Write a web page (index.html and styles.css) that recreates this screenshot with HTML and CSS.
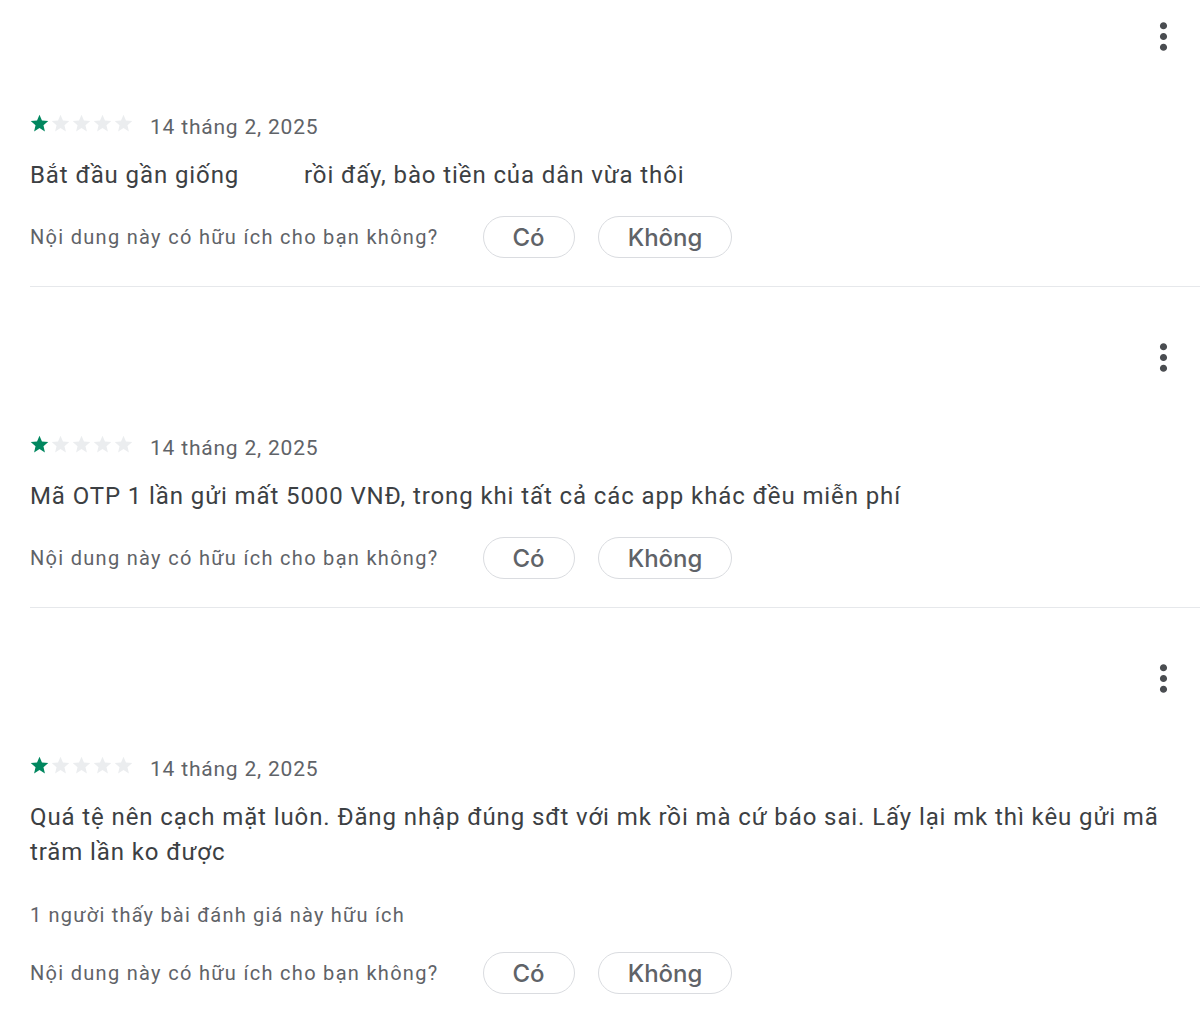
FILE: index.html
```html
<!DOCTYPE html>
<html lang="vi">

<head>
    <meta charset="UTF-8">
    <meta name="viewport" content="width=device-width, initial-scale=1.0">
    <title>Đánh giá</title>
    <link rel="stylesheet" href="styles.css">
</head>

<body>
    <div class="reviews">
        <div class="review">
            <div class="review-top">
                <button class="more-button" aria-label="Thêm">
                    <svg viewBox="0 0 24 24" class="more-icon"><path d="M12 8c1.1 0 2-.9 2-2s-.9-2-2-2-2 .9-2 2 .9 2 2 2zm0 2c-1.1 0-2 .9-2 2s.9 2 2 2 2-.9 2-2-.9-2-2-2zm0 6c-1.1 0-2 .9-2 2s.9 2 2 2 2-.9 2-2-.9-2-2-2z"/></svg>
                </button>
            </div>
            <div class="review-meta">
                <div class="stars">
                    <svg viewBox="0 0 24 24" class="star on"><path d="M12 17.27L18.18 21l-1.64-7.03L22 9.24l-7.19-.61L12 2 9.19 8.63 2 9.24l5.46 4.73L5.82 21z"/></svg>
                    <svg viewBox="0 0 24 24" class="star"><path d="M12 17.27L18.18 21l-1.64-7.03L22 9.24l-7.19-.61L12 2 9.19 8.63 2 9.24l5.46 4.73L5.82 21z"/></svg>
                    <svg viewBox="0 0 24 24" class="star"><path d="M12 17.27L18.18 21l-1.64-7.03L22 9.24l-7.19-.61L12 2 9.19 8.63 2 9.24l5.46 4.73L5.82 21z"/></svg>
                    <svg viewBox="0 0 24 24" class="star"><path d="M12 17.27L18.18 21l-1.64-7.03L22 9.24l-7.19-.61L12 2 9.19 8.63 2 9.24l5.46 4.73L5.82 21z"/></svg>
                    <svg viewBox="0 0 24 24" class="star"><path d="M12 17.27L18.18 21l-1.64-7.03L22 9.24l-7.19-.61L12 2 9.19 8.63 2 9.24l5.46 4.73L5.82 21z"/></svg>
                </div>
                <span class="review-date">14 tháng 2, 2025</span>
            </div>
            <p class="review-text">Bắt đầu gần giống <span class="blank"></span>rồi đấy, bào tiền của dân vừa thôi</p>
            <div class="helpful">
                <span class="helpful-question">Nội dung này có hữu ích cho bạn không?</span>
                <button class="chip">Có</button>
                <button class="chip">Không</button>
            </div>
        </div>

        <div class="review">
            <div class="review-top">
                <button class="more-button" aria-label="Thêm">
                    <svg viewBox="0 0 24 24" class="more-icon"><path d="M12 8c1.1 0 2-.9 2-2s-.9-2-2-2-2 .9-2 2 .9 2 2 2zm0 2c-1.1 0-2 .9-2 2s.9 2 2 2 2-.9 2-2-.9-2-2-2zm0 6c-1.1 0-2 .9-2 2s.9 2 2 2 2-.9 2-2-.9-2-2-2z"/></svg>
                </button>
            </div>
            <div class="review-meta">
                <div class="stars">
                    <svg viewBox="0 0 24 24" class="star on"><path d="M12 17.27L18.18 21l-1.64-7.03L22 9.24l-7.19-.61L12 2 9.19 8.63 2 9.24l5.46 4.73L5.82 21z"/></svg>
                    <svg viewBox="0 0 24 24" class="star"><path d="M12 17.27L18.18 21l-1.64-7.03L22 9.24l-7.19-.61L12 2 9.19 8.63 2 9.24l5.46 4.73L5.82 21z"/></svg>
                    <svg viewBox="0 0 24 24" class="star"><path d="M12 17.27L18.18 21l-1.64-7.03L22 9.24l-7.19-.61L12 2 9.19 8.63 2 9.24l5.46 4.73L5.82 21z"/></svg>
                    <svg viewBox="0 0 24 24" class="star"><path d="M12 17.27L18.18 21l-1.64-7.03L22 9.24l-7.19-.61L12 2 9.19 8.63 2 9.24l5.46 4.73L5.82 21z"/></svg>
                    <svg viewBox="0 0 24 24" class="star"><path d="M12 17.27L18.18 21l-1.64-7.03L22 9.24l-7.19-.61L12 2 9.19 8.63 2 9.24l5.46 4.73L5.82 21z"/></svg>
                </div>
                <span class="review-date">14 tháng 2, 2025</span>
            </div>
            <p class="review-text">Mã OTP 1 lần gửi mất 5000 VNĐ, trong khi tất cả các app khác đều miễn phí</p>
            <div class="helpful">
                <span class="helpful-question">Nội dung này có hữu ích cho bạn không?</span>
                <button class="chip">Có</button>
                <button class="chip">Không</button>
            </div>
        </div>

        <div class="review">
            <div class="review-top">
                <button class="more-button" aria-label="Thêm">
                    <svg viewBox="0 0 24 24" class="more-icon"><path d="M12 8c1.1 0 2-.9 2-2s-.9-2-2-2-2 .9-2 2 .9 2 2 2zm0 2c-1.1 0-2 .9-2 2s.9 2 2 2 2-.9 2-2-.9-2-2-2zm0 6c-1.1 0-2 .9-2 2s.9 2 2 2 2-.9 2-2-.9-2-2-2z"/></svg>
                </button>
            </div>
            <div class="review-meta">
                <div class="stars">
                    <svg viewBox="0 0 24 24" class="star on"><path d="M12 17.27L18.18 21l-1.64-7.03L22 9.24l-7.19-.61L12 2 9.19 8.63 2 9.24l5.46 4.73L5.82 21z"/></svg>
                    <svg viewBox="0 0 24 24" class="star"><path d="M12 17.27L18.18 21l-1.64-7.03L22 9.24l-7.19-.61L12 2 9.19 8.63 2 9.24l5.46 4.73L5.82 21z"/></svg>
                    <svg viewBox="0 0 24 24" class="star"><path d="M12 17.27L18.18 21l-1.64-7.03L22 9.24l-7.19-.61L12 2 9.19 8.63 2 9.24l5.46 4.73L5.82 21z"/></svg>
                    <svg viewBox="0 0 24 24" class="star"><path d="M12 17.27L18.18 21l-1.64-7.03L22 9.24l-7.19-.61L12 2 9.19 8.63 2 9.24l5.46 4.73L5.82 21z"/></svg>
                    <svg viewBox="0 0 24 24" class="star"><path d="M12 17.27L18.18 21l-1.64-7.03L22 9.24l-7.19-.61L12 2 9.19 8.63 2 9.24l5.46 4.73L5.82 21z"/></svg>
                </div>
                <span class="review-date">14 tháng 2, 2025</span>
            </div>
            <p class="review-text">Quá tệ nên cạch mặt luôn. Đăng nhập đúng sđt với mk rồi mà cứ báo sai. Lấy lại mk thì kêu gửi mã trăm lần ko được</p>
            <p class="helpful-count">1 người thấy bài đánh giá này hữu ích</p>
            <div class="helpful">
                <span class="helpful-question">Nội dung này có hữu ích cho bạn không?</span>
                <button class="chip">Có</button>
                <button class="chip">Không</button>
            </div>
        </div>
    </div>
</body>

</html>
```

FILE: styles.css
```css
body {
    font-family: Roboto, "Noto Sans", Arial, sans-serif;
    margin: 0;
    padding: 0;
    background-color: #fff;
    color: #3c4043;
}

.reviews {
    margin-left: 30px;
}

.review {
    padding-top: 46px;
    padding-bottom: 28px;
    border-bottom: 1px solid #e6e8eb;
}

.review:first-child {
    padding-top: 12px;
}

.review-top {
    display: flex;
    justify-content: flex-end;
    height: 48px;
}

.more-button {
    width: 48px;
    height: 48px;
    margin-right: 13px;
    padding: 0;
    border: none;
    background: none;
    display: flex;
    align-items: center;
    justify-content: center;
    cursor: pointer;
}

.more-icon {
    width: 43px;
    height: 43px;
    fill: #4a4d51;
}

.review-meta {
    display: flex;
    align-items: center;
    height: 24px;
    margin-top: 51px;
}

.stars {
    display: flex;
    margin-left: -1px;
}

.star {
    width: 21px;
    height: 21px;
    fill: #ebedef;
}

.star.on {
    fill: #01875f;
}

.review-date {
    margin-left: 16px;
    padding-top: 7px;
    font-size: 21px;
    color: #5f6368;
    letter-spacing: 0.8px;
}

.review-text {
    margin: 23px 30px 0 0;
    font-size: 24px;
    line-height: 35px;
    color: #3c4043;
    letter-spacing: 0.9px;
}

.blank {
    display: inline-block;
    width: 58px;
}

.helpful-count {
    margin: 31px 0 0;
    font-size: 20px;
    line-height: 28px;
    color: #5f6368;
    letter-spacing: 1.2px;
}

.helpful {
    display: flex;
    align-items: center;
    margin-top: 23px;
}

.helpful-question {
    font-size: 20px;
    color: #5f6368;
    letter-spacing: 1.3px;
    margin-right: 44px;
}

.chip {
    height: 42px;
    padding: 0 29px;
    margin-right: 23px;
    font-family: Inter, Roboto, "Noto Sans", Arial, sans-serif;
    font-size: 24px;
    font-weight: 500;
    color: #5f6368;
    background: #fff;
    border: 1px solid #dadce0;
    border-radius: 21px;
    cursor: pointer;
}
```
